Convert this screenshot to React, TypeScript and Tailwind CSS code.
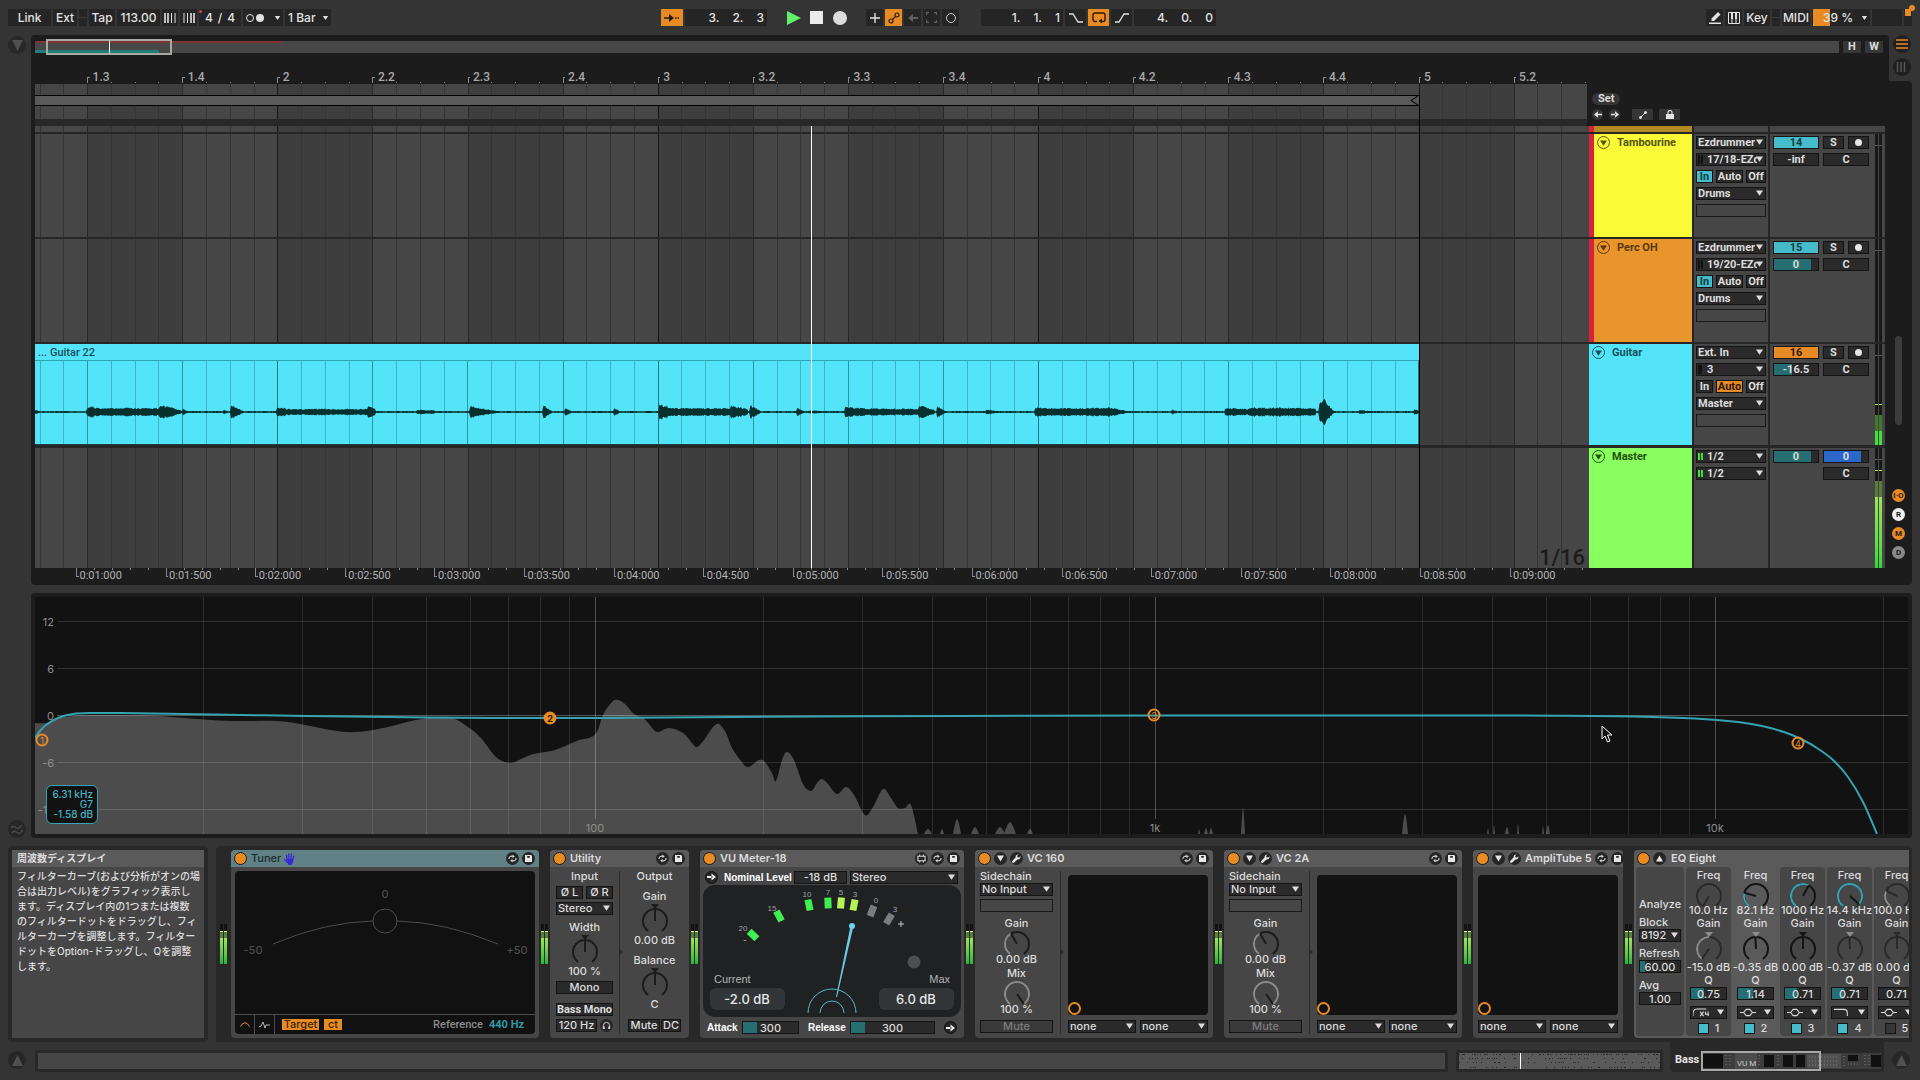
import { ReactNode } from 'react';
import clsx from 'clsx';

type Point = [number, number];

/* =========================
   TIMELINE DATA
========================= */
const TIMELINE = 1552;
const BEAT = 95.1;
const FIRST_BEAT = 52.6;

const BEATS = ['1.3', '1.4', '2', '2.2', '2.3', '2.4', '3', '3.2', '3.3', '3.4', '4', '4.2', '4.3', '4.4', '5', '5.2'];

const TIMES = [
  '0:01:000', '0:01:500', '0:02:000', '0:02:500', '0:03:000', '0:03:500', '0:04:000', '0:04:500', '0:05:000',
  '0:05:500', '0:06:000', '0:06:500', '0:07:000', '0:07:500', '0:08:000', '0:08:500', '0:09:000',
];

// start, end, level at start, level at end
const HITS = [
  [0, 5, 3, 1], [52, 58, 6, 8], [58, 125, 5, 5], [125, 146, 10, 2], [148, 153, 4, 1], [189, 192, 3, 1], [196, 207, 9, 2],
  [242, 250, 6, 5], [250, 333, 4, 4], [333, 340, 9, 4], [382, 400, 3, 2], [435, 444, 8, 5], [444, 464, 5, 1],
  [508, 516, 9, 2], [530, 537, 5, 1], [579, 585, 5, 1], [624, 634, 10, 6], [634, 696, 5, 5], [696, 712, 8, 4],
  [715, 725, 9, 2], [762, 770, 5, 1], [775, 792, 2, 1], [810, 822, 7, 5], [822, 883, 5, 4], [884, 899, 9, 3],
  [902, 911, 8, 1], [951, 963, 3, 1], [1000, 1010, 6, 5], [1010, 1073, 5, 5], [1073, 1094, 6, 1], [1137, 1142, 3, 1],
  [1190, 1214, 5, 4], [1214, 1280, 6, 5], [1284, 1288, 10, 17], [1288, 1298, 17, 2], [1324, 1336, 3, 1], [1379, 1384, 4, 2],
];

function wavePath() {
  const top: string[] = [];
  const bottom: string[] = [];
  for (let x = 0; x <= 1384; x++) {
    let amp = 1;
    HITS.forEach(([a, b, from, to]) => {
      if (x >= a && x <= b) amp = Math.max(amp, (from + ((to - from) * (x - a)) / (b - a)) * 0.85);
    });
    const noise = Math.abs((Math.sin(x * 78.233) * 43758.5453) % 1);
    const jitter = 0.65 + 0.35 * noise;
    top.push(`${x},${(52 - amp * jitter).toFixed(1)}`);
    bottom.unshift(`${x},${(52 + amp * jitter).toFixed(1)}`);
  }
  return `M${top.join('L')}L${bottom.join('L')}Z`;
}

/* =========================
   EQ DATA
========================= */
const SPECTRUM: Point[] = [
  [0, 126], [11, 126], [20, 122], [38, 119], [57, 118], [87, 118], [124, 119], [161, 122], [198, 124], [241, 124],
  [265, 127], [290, 132], [311, 135], [332, 134], [357, 129], [381, 123], [403, 120], [418, 121], [433, 130],
  [446, 141], [461, 160], [475, 166], [486, 162], [498, 157], [516, 154], [528, 150], [544, 143], [554, 141],
  [562, 135], [568, 118], [577, 105], [583, 103], [590, 107], [599, 117], [608, 121], [614, 127], [622, 135],
  [634, 131], [648, 136], [657, 146], [662, 150], [669, 143], [678, 130], [684, 127], [691, 136], [697, 151],
  [706, 164], [713, 170], [724, 163], [730, 165], [737, 176], [741, 184], [747, 163], [752, 155], [759, 163],
  [768, 187], [776, 194], [782, 186], [787, 182], [793, 187], [802, 197], [811, 190], [819, 198], [830, 218],
  [838, 210], [848, 192], [856, 201], [863, 211], [870, 211], [876, 208], [883, 237],
];

// x, y, half width
const PEAKS = [
  [893, 232, 4], [907, 232, 2], [922, 222, 4], [940, 230, 4], [965, 230, 5], [975, 225, 6], [995, 232, 3], [1164, 232, 1],
  [1171, 231, 2], [1176, 231, 2], [1208, 211, 2], [1370, 217, 3], [1453, 231, 1], [1459, 228, 1], [1472, 230, 2],
  [1483, 227, 1], [1508, 229, 1], [1513, 228, 2],
];

const CURVE: Point[] = [
  [0, 141], [5, 134], [11, 128], [23, 121], [38, 117], [57, 116], [87, 116], [149, 117], [271, 119], [394, 120.5],
  [485, 121], [577, 121], [700, 120], [925, 119], [1120, 118.5], [1400, 118.5], [1530, 118.7], [1599, 119.5], [1660, 121.5],
  [1703, 125], [1727, 129], [1749, 135], [1767, 142.5], [1782, 151], [1798, 163], [1813, 180], [1828, 205], [1842, 237],
];

function smooth(points: Point[]) {
  let d = `M${points[0][0]},${points[0][1]}`;
  for (let i = 0; i < points.length - 1; i++) {
    const [x0, y0] = points[Math.max(i - 1, 0)];
    const [x1, y1] = points[i];
    const [x2, y2] = points[i + 1];
    const [x3, y3] = points[Math.min(i + 2, points.length - 1)];
    d += `C${x1 + (x2 - x0) / 6},${y1 + (y2 - y0) / 6} ${x2 - (x3 - x1) / 6},${y2 - (y3 - y1) / 6} ${x2},${y2}`;
  }
  return d;
}

const freqX = (f: number) => 560 * Math.log10(f / 10);
const FREQS = [1, 2, 3, 4].flatMap((d) => [1, 2, 3, 4, 5, 6, 7, 8, 9].map((n) => n * 10 ** d)).filter((f) => f > 10 && f < 21000);

/* =========================
   SMALL CONTROLS
========================= */
function Triangle({ className = 'fill-[#dcdcdc]' }: { className?: string }) {
  return (
    <svg viewBox="0 0 8 6" className={clsx('w-[7px] h-[6px]', className)}>
      <path d="M0 0h8L4 6z" />
    </svg>
  );
}

function Select({ value, label, className, pad = 'pl-px', children }: { value: string; label: string; className?: string; pad?: string; children?: ReactNode }) {
  return (
    <div className={clsx('relative h-[13px] bg-[#2a2a2a] border border-[#141414] text-[#dcdcdc]', className)}>
      <select aria-label={label} className={clsx('block w-full h-[11px] appearance-none bg-transparent leading-[11px] pr-2 overflow-hidden outline-none', pad)}>
        <option>{value}</option>
      </select>
      {children}
      <span className="absolute right-[2px] top-[2px] pointer-events-none">
        <Triangle />
      </span>
    </div>
  );
}

function Btn({ children, className, label }: { children?: ReactNode; className?: string; label?: string }) {
  return (
    <button aria-label={label} className={clsx('h-[13px] flex items-center justify-center border border-[#141414] leading-[11px] whitespace-nowrap', className)}>
      {children}
    </button>
  );
}

function Field({ value, label, fill = 0, color = 'bg-[#256e72]', className }: { value: string; label: string; fill?: number; color?: string; className?: string }) {
  return (
    <div className={clsx('relative h-[13px] bg-[#2a2a2a] border border-[#141414]', className)}>
      <div className={clsx('absolute inset-y-0 left-0', color)} style={{ width: `${fill}%` }} />
      <input aria-label={label} defaultValue={value} className="relative block w-full h-[11px] leading-[11px] text-center bg-transparent text-[#dcdcdc] outline-none" />
    </div>
  );
}

function arc(from: number, to: number) {
  const p = (a: number) => {
    const r = ((a - 90) * Math.PI) / 180;
    return `${(14 + 12 * Math.cos(r)).toFixed(2)} ${(14 + 12 * Math.sin(r)).toFixed(2)}`;
  };
  return `M${p(from)}A12 12 0 ${to - from > 180 ? 1 : 0} 1 ${p(to)}`;
}

type KnobProps = { angle: number; label: string; fill?: string; bipolar?: boolean; track?: string; needle?: string; marker?: string };

function Knob({ angle, label, fill, bipolar, track = '#1c1c1c', needle = '#1c1c1c', marker }: KnobProps) {
  const r = ((angle - 90) * Math.PI) / 180;
  return (
    <span className="relative block w-7 h-7">
      <svg viewBox="0 0 28 28" className="w-7 h-7 overflow-visible" fill="none" strokeWidth="2">
        <path d={arc(-145, 145)} stroke={track} />
        {fill && bipolar && <path d={arc(angle, 0)} stroke={fill} />}
        {fill && !bipolar && angle > -144 && <path d={arc(-145, angle)} stroke={fill} />}
        <path d={`M14 14L${14 + 12 * Math.cos(r)} ${14 + 12 * Math.sin(r)}`} stroke={needle} />
        {marker && <path d="M10 -3h8l-4 5z" fill={marker} />}
      </svg>
      <input type="range" aria-label={label} className="absolute inset-0 w-7 h-7 opacity-0" />
    </span>
  );
}

function Round({ children, label, className = 'bg-[#262626]' }: { children?: ReactNode; label: string; className?: string }) {
  return (
    <button aria-label={label} className={clsx('size-[13px] shrink-0 rounded-full flex items-center justify-center', className)}>
      {children}
    </button>
  );
}

function Meter({ className }: { className?: string }) {
  return (
    <div className={clsx('shrink-0 flex justify-center gap-px pt-[74px]', className)}>
      {[0, 1].map((i) => (
        <div key={i} className="w-[3px] h-10 flex flex-col bg-[#121212]">
          <div className="mt-[7px] h-px bg-[#e6f28a]" />
          <div className="h-[6px] bg-[#56803c]" />
          <div className="flex-1 bg-linear-to-b from-[#9be35c] to-[#25b53c]" />
        </div>
      ))}
    </div>
  );
}

/* =========================
   TOP BAR
========================= */
const cell = 'h-[17px] bg-[#252525] text-[#e2e2e2] flex items-center justify-center';

function TopBar() {
  return (
    <header className="h-[35px] px-2 pt-[9px] grid grid-cols-[653fr_1251fr] items-start text-[12px] leading-[17px] font-medium">
      <div className="flex gap-[2px]">
        <button className={clsx(cell, 'w-[43px]')}>Link</button>
        <button className={clsx(cell, 'w-6')}>Ext</button>
        <span className={clsx(cell, 'w-2')}><i className="w-2 h-px bg-[#3a3a3a]" /></span>
        <button className={clsx(cell, 'w-[26px]')}>Tap</button>
        <input aria-label="Tempo" defaultValue="113.00" className="h-[17px] w-[43px] bg-[#252525] text-[#e2e2e2] text-center" />
        <button aria-label="Nudge down" className={clsx(cell, 'w-4')}>
          <svg viewBox="0 0 12 10" className="w-3 h-[10px]" stroke="#e2e2e2"><path d="M1 0v10M4 0v10" strokeWidth="1.6" /><path d="M7.500 0v10M11 0v10" /></svg>
        </button>
        <button aria-label="Nudge up" className={clsx(cell, 'w-[17px]')}>
          <svg viewBox="0 0 12 10" className="w-3 h-[10px]" stroke="#e2e2e2"><path d="M1 0v10M4.500 0v10" /><path d="M8 0v10M11 0v10" strokeWidth="1.6" /></svg>
        </button>
        <div className={clsx(cell, 'w-[42px] relative gap-[5px]')}>
          <span>4</span><span>/</span><span>4</span>
          <i className="absolute left-0 top-px size-[3px] rounded-full bg-[#d8404a]" />
        </div>
        <button aria-label="Metronome" className={clsx(cell, 'w-10 gap-[2px]')}>
          <i className="size-2 rounded-full border border-[#e2e2e2]" />
          <i className="size-2 rounded-full bg-[#e2e2e2]" />
          <Triangle className="fill-[#e2e2e2] scale-75 ml-2" />
        </button>
        <div className={clsx(cell, 'w-[46px] relative')}>
          <select aria-label="Quantization" className="w-full h-[17px] pl-[3px] appearance-none bg-transparent outline-none">
            <option>1 Bar</option>
          </select>
          <Triangle className="fill-[#e2e2e2] scale-75 absolute right-[2px]" />
        </div>
      </div>

      <div className="flex justify-between">
        <div className="flex items-center gap-[2px]">
          <button aria-label="Follow" className="w-[22px] h-[17px] bg-[#e88b25] flex items-center justify-center">
            <svg viewBox="0 0 16 10" className="w-4 h-[10px]"><path d="M0 5h6" stroke="#2a1a05" strokeWidth="1.5" /><path d="M5 1l5 4-5 4z" fill="#2a1a05" /><path d="M11 5h5" stroke="#2a1a05" strokeWidth="1.5" strokeDasharray="1.5 1" /></svg>
          </button>
          <div className={clsx(cell, 'w-[82px] justify-end pr-[3px] gap-[13px]')}><span>3.</span><span>2.</span><span>3</span></div>
          <button aria-label="Play" className="ml-[18px] w-[15px]"><svg viewBox="0 0 14 14" className="w-[14px] h-[14px] fill-[#62f06a]"><path d="M0 0l14 7L0 14z" /></svg></button>
          <button aria-label="Stop" className="ml-[6px] size-[13px] bg-[#ebebeb]" />
          <button aria-label="Record" className="ml-2 size-[14px] rounded-full bg-[#dcdcdc]" />
          <button aria-label="Overdub" className={clsx(cell, 'ml-[17px] w-[17px]')}><svg viewBox="0 0 10 10" className="size-[10px]" stroke="#e2e2e2" strokeWidth="1.4"><path d="M5 0v10M0 5h10" /></svg></button>
          <button aria-label="Automation arm" className="w-[17px] h-[17px] bg-[#e88b25] flex items-center justify-center">
            <svg viewBox="0 0 12 12" className="size-3" fill="none" stroke="#2a1a05" strokeWidth="1.2"><circle cx="3" cy="9" r="2" /><circle cx="9" cy="3" r="2" /><path d="M4.5 7.5l3-3" /></svg>
          </button>
          <button aria-label="Re-enable" className={clsx(cell, 'w-[17px]')}><svg viewBox="0 0 10 8" className="w-[10px] h-2" fill="#5e5e5e"><path d="M5 0v8L0 4zM4 3h6v2H4z" /></svg></button>
          <button aria-label="Capture" className={clsx(cell, 'w-[17px]')}><svg viewBox="0 0 11 11" className="size-[11px]" fill="none" stroke="#5e5e5e" strokeWidth="1.2"><path d="M.6 3V.6H3M8 .6h2.4V3M10.400 8v2.400H8M3 10.400H.6V8" /></svg></button>
          <button aria-label="Session record" className={clsx(cell, 'w-[17px]')}><i className="size-[10px] rounded-full border border-[#c8c8c8]" /></button>
          <div className={clsx(cell, 'ml-[20px] w-[82px] justify-end pr-[3px] gap-[13px]')}><span>1.</span><span>1.</span><span>1</span></div>
          <button aria-label="Punch in" className={clsx(cell, 'w-[21px]')}><svg viewBox="0 0 14 10" className="w-[14px] h-[10px]" fill="none" stroke="#e2e2e2" strokeWidth="1.3"><path d="M0 1h4l5 8h5" /></svg></button>
          <button aria-label="Loop" className="w-[21px] h-[17px] bg-[#e88b25] flex items-center justify-center">
            <svg viewBox="0 0 14 12" className="w-[14px] h-3"><path d="M5 9.500H3a2 2 0 0 1-2-2V3a2 2 0 0 1 2-2h8a2 2 0 0 1 2 2v4.500a2 2 0 0 1-2 2H9" fill="none" stroke="#2a1a05" strokeWidth="1.400" /><path d="M10 6.500v5L6.500 9z" fill="#2a1a05" /></svg>
          </button>
          <button aria-label="Punch out" className={clsx(cell, 'w-[21px]')}><svg viewBox="0 0 14 10" className="w-[14px] h-[10px]" fill="none" stroke="#e2e2e2" strokeWidth="1.3"><path d="M0 9h4l5-8h5" /></svg></button>
          <div className={clsx(cell, 'w-[82px] justify-end pr-[3px] gap-[13px]')}><span>4.</span><span>0.</span><span>0</span></div>
        </div>

        <div className="flex gap-[2px]">
          <button aria-label="Draw mode" className={clsx(cell, 'w-[17px]')}><svg viewBox="0 0 12 12" className="size-3" fill="#e2e2e2"><path d="M9 0l2.500 2.500-6.500 6.500H2.500V6.500zM0 10.500h12V12H0z" /></svg></button>
          <button aria-label="MIDI keyboard" className={clsx(cell, 'w-[17px]')}><svg viewBox="0 0 12 12" className="size-3" fill="none" stroke="#e2e2e2"><path d="M.5.5h11v11H.5zM4 6v6M8 6v6" /><path d="M4 0v7M8 0v7" strokeWidth="2" /></svg></button>
          <button className={clsx(cell, 'w-[26px]')}>Key</button>
          <span className={clsx(cell, 'w-2')}><i className="w-2 h-px bg-[#3a3a3a]" /></span>
          <button className={clsx(cell, 'w-7')}>MIDI</button>
          <div className={clsx(cell, 'w-[58px] relative')}>
            <div className="absolute left-px inset-y-0 bg-[#e88b25] w-[17px]" />
            <select aria-label="CPU load" className="relative w-full h-[17px] pl-[11px] appearance-none bg-transparent outline-none"><option>39 %</option></select>
            <Triangle className="fill-[#e2e2e2] scale-75 absolute right-[2px]" />
          </div>
          <span className={clsx(cell, 'w-[30px]')} />
          <span className={clsx(cell, 'w-2 relative')}>
            <i className="absolute right-px top-0 w-[6px] h-[7px] bg-[#e88b25]" />
            <i className="absolute -right-[3px] -top-1 size-[6px] rounded-full bg-[#e88b25]" />
          </span>
        </div>
      </div>
    </header>
  );
}

/* =========================
   ARRANGEMENT
========================= */
const pct = (x: number) => `${(x / TIMELINE) * 100}%`;

function BeatRuler() {
  return (
    <div className="relative h-7 ml-1 mr-[302px] z-10 text-[12px] leading-3 font-medium text-[#a8a8a8]">
      <svg viewBox={`0 0 ${TIMELINE} 28`} preserveAspectRatio="none" className="absolute inset-0 w-full h-full" stroke="#8a8a8a" fill="none" shapeRendering="crispEdges">
        {BEATS.map((b, i) => {
          const x = FIRST_BEAT + i * BEAT;
          return <path key={b} d={`M${x} 28v-6h2M${x + 23.8} 28v-1M${x + 47.5} 28v-1M${x + 71.3} 28v-1`} />;
        })}
      </svg>
      {BEATS.map((b, i) => (
        <span key={b} className="absolute top-4 pl-[5px]" style={{ left: pct(FIRST_BEAT + i * BEAT) }}>{b}</span>
      ))}
    </div>
  );
}

function LaneGrid({ lines = true }: { lines?: boolean }) {
  const sixteenths = Array.from({ length: 65 }, (_, i) => i);
  return (
    <svg viewBox={`0 0 ${TIMELINE} 100`} preserveAspectRatio="none" className="absolute inset-0 w-full h-full" shapeRendering="crispEdges">
      {lines && BEATS.map((b, i) => i % 2 === 0 && <rect key={b} x={FIRST_BEAT + i * BEAT} y="0" width={BEAT} height="100" fill="#3e3e3e" />)}
      {sixteenths.map((i) => {
        const x = FIRST_BEAT + (i - 2) * (BEAT / 4);
        const n = i - 2;
        const bar = n % 16 === 8;
        return <path key={i} d={`M${x} 0v100`} stroke={lines ? (bar ? '#161616' : n % 4 === 0 ? '#292929' : '#343434') : bar ? '#1c6b75' : n % 4 === 0 ? '#2b8c99' : '#3cb0bf'} />;
      })}
    </svg>
  );
}

function Timeline() {
  return (
    <div className="flex-1 min-w-0 flex flex-col">
      <div className="relative flex-1 flex flex-col bg-[#464646]">
        <LaneGrid />
        <div className="relative mt-[11px] h-[11px] w-[89.2%] bg-[#5a5a5a] border-y border-black flex justify-end">
          <svg viewBox="0 0 9 9" className="h-[9px] w-[9px]" fill="none" stroke="#111" strokeWidth="1.2"><path d="M8 0L1 4.500 8 9" /></svg>
        </div>
        <div className="relative mt-[13px] h-[7px] bg-[#282828]" />
        <div className="relative h-2 border-b-2 border-[#262626]" />
        <div className="relative h-[105px] border-b-2 border-[#262626]" />
        <div className="relative h-[105px] border-b-2 border-[#262626]" />
        <div className="relative h-[104px] border-b-[3px] border-[#262626]">
          <div className="relative h-full w-[89.2%] bg-[#54e4fa] overflow-hidden border-b border-[#1e3c40]">
            <p className="h-[17px] pl-[3px] text-[11px] leading-[17px] font-medium text-[#155059] border-b border-[#2aa5b5]">... Guitar 22</p>
            <div className="absolute top-[17px] bottom-0 left-0 w-[112.1%]"><LaneGrid lines={false} /></div>
            <svg viewBox="0 0 1384 84" preserveAspectRatio="none" className="absolute left-0 bottom-0 w-full h-[84px]">
              <path d={wavePath()} fill="#08302f" />
            </svg>
          </div>
        </div>
        <div className="relative flex-1 min-h-[120px] flex items-end justify-end">
          <span className="text-[22px] leading-5 font-medium text-[#1c1c1c] pr-[2px]">1/16</span>
        </div>
        {/* playhead and end of the set */}
        <div className="absolute top-[11px] bottom-0 w-px bg-black" style={{ left: pct(1384) }} />
        <div className="absolute top-[42px] bottom-0 w-px bg-white" style={{ left: pct(776) }} />
      </div>
      <div className="relative h-[17px] text-[11px] leading-[16px] text-[#b4b4b4]">
        <svg viewBox={`0 0 ${TIMELINE} 17`} preserveAspectRatio="none" className="absolute inset-0 w-full h-full" stroke="#8a8a8a" fill="none" shapeRendering="crispEdges">
          {TIMES.map((t, i) => {
            const x = 41.5 + i * 89.6;
            return <path key={t} d={`M${x} 0v8h2M${x + 18} 0v2M${x + 36} 0v2M${x + 54} 0v2M${x + 72} 0v2`} />;
          })}
        </svg>
        {TIMES.map((t, i) => (
          <span key={t} className="absolute top-0 pl-[3px]" style={{ left: pct(41.5 + i * 89.6) }}>{t}</span>
        ))}
      </div>
    </div>
  );
}

type Track = {
  name: string;
  color: string;
  ink: string;
  grouped?: boolean;
  input: string;
  channel: string;
  monitor: 'In' | 'Auto';
  output: string;
  number: string;
  volume: string;
  fill: number;
  height: string;
  level: number;
};

const TRACKS: Track[] = [
  { name: 'Tambourine', color: 'bg-[#fafa37]', ink: 'text-[#55550f] border-[#55550f]', grouped: true, input: 'Ezdrummer', channel: '17/18-EZd', monitor: 'In', output: 'Drums', number: '14', volume: '-inf', fill: 0, height: 'h-[105px] border-b-2', level: 0 },
  { name: 'Perc OH', color: 'bg-[#e8962c]', ink: 'text-[#5a3508] border-[#5a3508]', grouped: true, input: 'Ezdrummer', channel: '19/20-EZd', monitor: 'In', output: 'Drums', number: '15', volume: '0', fill: 84, height: 'h-[105px] border-b-2', level: 0 },
  { name: 'Guitar', color: 'bg-[#54e4fa]', ink: 'text-[#155059] border-[#155059]', input: 'Ext. In', channel: '3', monitor: 'Auto', output: 'Master', number: '16', volume: '-16.5', fill: 42, height: 'h-[104px] border-b-[3px]', level: 14 },
];

function TrackName({ name, color, ink, grouped }: Pick<Track, 'name' | 'color' | 'ink' | 'grouped'>) {
  return (
    <div className="w-[107px] pl-[2px] flex border-r-2 border-[#262626]">
      {grouped && <div className="w-[5px] bg-[#d8213c]" />}
      <div className={clsx('flex-1 flex items-start gap-[7px] pl-[3px] pt-[2px]', color)}>
        <button aria-label={`Fold ${name}`} className={clsx('size-[13px] rounded-full border flex items-center justify-center', ink)}>
          <Triangle className="fill-current" />
        </button>
        <span className={clsx('leading-[13px] font-bold', ink)}>{name}</span>
      </div>
    </div>
  );
}

function TrackMeter({ level, hot }: { level: number; hot?: boolean }) {
  return (
    <div className="ml-[6px] flex gap-px">
      {[0, 1].map((i) => (
        <div key={i} className="w-[3px] h-full bg-[#181818] flex flex-col justify-end">
          <div className="h-px bg-[#5a5a5a] mt-[11px] mb-auto" />
          {level > 0 && <div className="h-px bg-[#b5e86a] mb-[10px]" />}
          {level > 0 && <div className={clsx('h-4', hot ? 'bg-[#5a7c3a]' : 'bg-[#3f7a2c]')} />}
          <div className={clsx(hot ? 'bg-linear-to-b from-[#9be35c] to-[#2fd83c]' : 'bg-[#3fe03c]')} style={{ height: level }} />
        </div>
      ))}
    </div>
  );
}

const dark = 'bg-[#2a2a2a] text-[#dcdcdc]';
const cyan = 'bg-[#46bccb] text-[#0f3d44]';
const orange = 'bg-[#e88b25] text-[#2a1a05]';

function TrackRow(track: Track) {
  const { name, height, input, channel, monitor, output, number, volume, fill, level } = track;
  return (
    <div className={clsx('flex bg-[#464646] border-[#262626]', height)}>
      <TrackName {...track} />
      <div className="w-[76px] px-[2px] pt-[2px] flex flex-col gap-1 border-r-2 border-[#262626]">
        <Select label={`${name} input`} value={input} />
        <Select label={`${name} channel`} value={channel} pad="pl-[10px]">
          <i className={clsx('absolute left-px top-px h-[9px] border-[#121212]', channel === '3' ? 'w-1 bg-[#121212]' : 'w-[5px] border-x-2')} />
        </Select>
        <div className="flex justify-between">
          <Btn className={clsx('w-[17px]', monitor === 'In' ? cyan : dark)}>In</Btn>
          <Btn className={clsx('w-[27px]', monitor === 'Auto' ? orange : dark)}>Auto</Btn>
          <Btn className={clsx('w-5', dark)}>Off</Btn>
        </div>
        <Select label={`${name} output`} value={output} />
        <div className="h-[13px] border border-[#1a1a1a]" />
      </div>
      <div className="flex-1 pl-[3px] flex">
        <div className="grid grid-cols-[46px_21px_21px] gap-x-1 gap-y-1 content-start pt-[2px]">
          <Btn className={number === '16' ? orange : cyan}>{number}</Btn>
          <Btn className={dark}>S</Btn>
          <Btn className={dark} label={`Arm ${name}`}><i className="size-[7px] rounded-full bg-[#e6e6e6]" /></Btn>
          <Field label={`${name} volume`} value={volume} fill={fill} />
          <Field label={`${name} pan`} value="C" className="col-span-2" />
        </div>
        <TrackMeter level={level} />
      </div>
    </div>
  );
}

function MasterRow() {
  const io = (
    <i className="absolute left-px top-[2px] w-[5px] h-[7px] border-x-2 border-[#3fe03c]" />
  );
  return (
    <div className="flex flex-1 min-h-[120px] bg-[#464646]">
      <TrackName name="Master" color="bg-[#88ff5e]" ink="text-[#245010] border-[#245010]" />
      <div className="w-[76px] px-[2px] pt-[2px] flex flex-col gap-1 border-r-2 border-[#262626]">
        <Select label="Cue out" value="1/2" pad="pl-[10px]">{io}</Select>
        <Select label="Master out" value="1/2" pad="pl-[10px]">{io}</Select>
      </div>
      <div className="flex-1 pl-[3px] flex">
        <div className="grid grid-cols-[46px_46px] gap-1 content-start pt-[2px]">
          <Field label="Master volume" value="0" fill={84} />
          <Field label="Cue volume" value="0" fill={84} color="bg-[#2968c8]" />
          <Field label="Master pan" value="C" className="col-start-2" />
        </div>
        <TrackMeter level={71} hot />
      </div>
    </div>
  );
}

function Arrangement() {
  const rail = [
    ['I·O', 'bg-[#e88b25]'],
    ['R', 'bg-[#f0f0f0]'],
    ['M', 'bg-[#e88b25]'],
    ['D', 'bg-[#8a8a8a]'],
  ];
  return (
    <section className="flex-1 flex pr-2 font-[Roboto,sans-serif]">
      <div className="w-[31px] pl-2">
        <button aria-label="Show browser" className="mt-px size-[18px] rounded-full bg-[#282828] flex items-center justify-center">
          <svg viewBox="0 0 10 10" className="size-[11px] fill-[#505050]"><path d="M0 0h10L5 10z" /></svg>
        </button>
      </div>
      <div className="flex-1 min-w-0 flex flex-col">
        <div className="h-[46px] flex">
          <div className="flex-1 bg-[#1c1c1c] rounded-t-sm">
            <div className="h-5 pt-[6px] pl-1 pr-[6px] flex gap-1">
              <div className="relative flex-1 h-3 bg-[#474747]">
                <div className="absolute left-0 top-0 h-[2px] w-[248px] bg-[#7c3436]" />
                <div className="absolute left-0 bottom-0 h-[3px] w-[124px] bg-[#227c78]" />
                <div className="absolute left-[11px] -top-[2px] w-[126px] h-4 border-2 border-[#a6aaa2]" />
                <div className="absolute left-[74px] top-0 w-px h-3 bg-white" />
              </div>
              <button className="w-[18px] h-3 bg-[#363636] text-[11px] leading-3 font-bold text-[#dcdcdc]">H</button>
              <button className="w-[18px] h-3 bg-[#363636] text-[11px] leading-3 font-bold text-[#dcdcdc]">W</button>
            </div>
            <BeatRuler />
          </div>
          <div className="w-[23px] pl-1 flex flex-col gap-[5px]">
            <button aria-label="Arrangement view" className="size-[18px] rounded-full bg-[#202020] flex items-center justify-center">
              <svg viewBox="0 0 12 10" className="w-3 h-[10px]" stroke="#e88b25" strokeWidth="1.500"><path d="M0 1h12M0 5h12M0 9h12" /></svg>
            </button>
            <button aria-label="Session view" className="size-[18px] rounded-full bg-[#202020] flex items-center justify-center">
              <svg viewBox="0 0 12 10" className="w-3 h-[10px]" stroke="#555" strokeWidth="1.500"><path d="M1.500 0v10M5 0v10M8.500 0v10" /></svg>
            </button>
          </div>
        </div>

        <div className="flex-1 flex pl-1 bg-[#1c1c1c] rounded-b-sm rounded-tr-sm">
          <div className="flex-1 min-w-0 flex pt-[3px]"><Timeline /></div>
          <div className="w-[298px] flex flex-col">
            <div className="h-[45px] pt-[12px] pl-[5px] text-[11px] text-[#dcdcdc]">
              <button className="block h-3 px-[6px] rounded-full bg-[#363636] leading-3 font-bold">Set</button>
              <div className="mt-1 flex items-center">
                <button aria-label="Previous locator" className="size-[11px] rounded-full bg-[#363636] flex items-center justify-center">
                  <svg viewBox="0 0 10 8" className="w-2 h-[7px]" fill="#e6e6e6"><path d="M5 0v8L0 4zM4 3h6v2H4z" /></svg>
                </button>
                <button aria-label="Next locator" className="ml-[6px] size-[11px] rounded-full bg-[#363636] flex items-center justify-center">
                  <svg viewBox="0 0 10 8" className="w-2 h-[7px]" fill="#e6e6e6"><path d="M5 0v8l5-4zM0 3h6v2H0z" /></svg>
                </button>
                <button aria-label="Automation mode" className="ml-3 w-[21px] h-[11px] bg-[#363636] flex items-center justify-center">
                  <svg viewBox="0 0 8 8" className="size-2" fill="#e6e6e6" stroke="#e6e6e6"><circle cx="1.500" cy="6.500" r="1" /><circle cx="6.500" cy="1.500" r="1" /><path d="M2 6l4-4" /></svg>
                </button>
                <button aria-label="Lock envelopes" className="ml-[6px] w-[21px] h-[11px] bg-[#363636] flex items-center justify-center">
                  <svg viewBox="0 0 8 9" className="w-2 h-[9px]" fill="#e6e6e6"><path d="M0 4h8v5H0z" /><path d="M2 4V2.500a2 2 0 0 1 4 0V4" fill="none" stroke="#e6e6e6" strokeWidth="1.200" /></svg>
                </button>
              </div>
            </div>
            <div className="flex h-2 border-b-2 border-[#262626] bg-[#464646]">
              <div className="w-[107px] pl-[2px] flex border-r-2 border-[#262626]">
                <div className="w-[5px] bg-[#d8213c]" />
                <div className="flex-1 bg-[#b58a25]" />
              </div>
              <div className="w-[76px] border-r-2 border-[#262626]" />
            </div>
            <div className="flex-1 flex flex-col text-[11px] font-bold">
              {TRACKS.map((t) => <TrackRow key={t.name} {...t} />)}
              <MasterRow />
            </div>
            <div className="h-[17px]" />
          </div>
          <div className="w-[27px] flex flex-col items-center">
            <div className="mt-[255px] w-[7px] h-[89px] rounded-full bg-[#3c3c3c]" />
            <div className="mt-16 flex flex-col gap-[6px]">
              {rail.map(([t, c]) => (
                <button key={t} className={clsx('size-[13px] rounded-full text-[8px] leading-[13px] font-bold text-[#1a1a1a] text-center', c)}>{t}</button>
              ))}
            </div>
          </div>
        </div>
      </div>
    </section>
  );
}

/* =========================
   EQ DISPLAY
========================= */
function EqDisplay() {
  const nodes = [
    { n: 1, x: 7, y: 143 },
    { n: 2, x: 515, y: 121 },
    { n: 3, x: 1119, y: 118 },
    { n: 4, x: 1763, y: 146 },
  ];
  return (
    <section className="mt-2 h-[245px] flex pr-2">
      <div className="w-[31px] pl-2 pt-[227px]">
        <button aria-label="Follow display" className="size-[18px] rounded-full bg-[#272727] flex items-center justify-center">
          <svg viewBox="0 0 12 10" className="w-3 h-[10px]" fill="none" stroke="#4a4a4a" strokeWidth="1.500"><path d="M0 4c3-5 5 2 8 0l3-3M1 9c3-5 5 2 8 0l3-3" /></svg>
        </button>
      </div>
      <div className="flex-1 p-1 bg-[#1c1c1c] rounded-sm">
        <div className="relative h-full bg-[#121212] overflow-hidden text-[11px] leading-3 text-[#8c8c8c]">
          <svg viewBox="0 0 1873 237" preserveAspectRatio="none" className="absolute inset-0 w-full h-full">
            <path d={`${smooth(SPECTRUM)}L0 237Z`} fill="#4c4c4c" />
            {PEAKS.map(([x, y, w]) => <path key={x} d={`M${x - w} 237Q${x - w / 3} ${y} ${x} ${y}Q${x + w / 3} ${y} ${x + w} 237Z`} fill="#4c4c4c" />)}
            <g stroke="#fff" shapeRendering="crispEdges">
              {FREQS.map((f) => {
                const major = f === 100 || f === 1000 || f === 10000;
                return <path key={f} d={`M${freqX(f)} 0V${major ? 222 : 237}`} opacity={major ? 0.26 : 0.11} />;
              })}
              {[25, 72, 119, 166, 213].map((y) => <path key={y} d={`M22 ${y - 0.5}H1873`} opacity={y === 119 ? 0.28 : 0.13} />)}
            </g>
            <path d={smooth(CURVE)} fill="none" stroke="#35a3b1" strokeWidth="2" />
          </svg>
          {[['12', 'top-[19px]'], ['6', 'top-[66px]'], ['0', 'top-[113px]'], ['-6', 'top-[160px]'], ['-12', 'top-[207px]']].map(([t, top]) => (
            <span key={t} className={clsx('absolute left-0 w-[19px] text-right', top)}>{t}</span>
          ))}
          {[['100', 560], ['1k', 1120], ['10k', 1680]].map(([t, x]) => (
            <span key={t} className="absolute bottom-0 -translate-x-1/2" style={{ left: `${(Number(x) / 1873) * 100}%` }}>{t}</span>
          ))}
          {nodes.map(({ n, x, y }) => (
            <button
              key={n}
              aria-label={`Band ${n}`}
              className={clsx('absolute size-[13px] -translate-1/2 rounded-full border-2 border-[#e88b25] text-[9px] flex items-center justify-center', n === 2 ? 'bg-[#e88b25] text-[#1a1a1a] font-bold' : 'text-[#e88b25]')}
              style={{ left: `${(x / 1873) * 100}%`, top: y }}
            >
              {n}
            </button>
          ))}
          <p className="absolute left-[11px] bottom-[10px] w-[52px] h-[39px] rounded-md border border-[#35a3b1] bg-[#121212] pt-[3px] pr-1 text-right leading-[10px] text-[10px] font-medium text-[#43b4c6]">
            6.31 kHz<br />G7<br />-1.58 dB
          </p>
          <svg viewBox="0 0 12 19" className="absolute left-[83.6%] top-[128px] w-3 h-[19px]"><path d="M1 1v13l3-3 2.500 6 2.500-1-2.500-6H11z" fill="#111" stroke="#fff" /></svg>
        </div>
      </div>
    </section>
  );
}

/* =========================
   DEVICES
========================= */
function OnDot() {
  return <Round label="Device on" className="bg-[#e88b25] border border-[#1a1a1a]" />;
}

function Swap() {
  return (
    <Round label="Hot-swap">
      <svg viewBox="0 0 10 10" className="size-[9px]" fill="none" stroke="#dcdcdc" strokeWidth="1.200"><path d="M1 5.500C1 3 3 2 5.500 2.500M9 4.500C9 7 7 8 4.500 7.500" /><path d="M5 .5L7.500 2.700 5 4.500zM5 5.500L2.500 7.300 5 9.500z" fill="#dcdcdc" stroke="none" /></svg>
    </Round>
  );
}

function Save() {
  return (
    <Round label="Save preset">
      <svg viewBox="0 0 8 8" className="size-[7px]"><path d="M0 0h7l1 1v7H0z" fill="#e6e6e6" /><path d="M2.500 1h3v2h-3z" fill="#262626" /></svg>
    </Round>
  );
}

function Wrench() {
  return (
    <Round label="Edit plug-in">
      <svg viewBox="0 0 10 10" className="size-[9px]"><path d="M9.500 2.500L8 4 6 3.500 5.800 2 7.300.5A3 3 0 0 0 4 4L.5 7.500a1.300 1.300 0 0 0 2 2L6 6a3 3 0 0 0 3.500-3.500z" fill="#e6e6e6" /></svg>
    </Round>
  );
}

function Fold({ up }: { up?: boolean }) {
  return (
    <Round label="Unfold plug-in">
      <svg viewBox="0 0 8 7" className={clsx('w-[7px] h-[7px] fill-[#e6e6e6]', up && 'rotate-180')}><path d="M0 0h8L4 7z" /></svg>
    </Round>
  );
}

function ArrowRight({ label }: { label: string }) {
  return (
    <Round label={label} className="bg-[#262626] border border-[#111]">
      <svg viewBox="0 0 10 8" className="w-[9px] h-2" fill="#f0f0f0"><path d="M5 0v8l5-4zM0 3h6v2H0z" /></svg>
    </Round>
  );
}

type DeviceProps = { title: string; width: string; left?: ReactNode; right?: ReactNode; children: ReactNode };

function Device({ title, width, left, right, children }: DeviceProps) {
  return (
    <article className={clsx('shrink-0 h-[188px] rounded bg-[#464646] overflow-hidden text-[11px] leading-[13px] font-medium text-[#dcdcdc] flex flex-col', width)}>
      <header className="h-[17px] pl-[3px] pr-1 flex items-center gap-[3px] bg-[#5a5a5a]">
        <OnDot />
        {left}
        <h2 className="flex-1 ml-px font-semibold whitespace-nowrap">{title}</h2>
        {right}
      </header>
      {children}
    </article>
  );
}

function Tuner() {
  return (
    <article className="shrink-0 w-[308px] h-[188px] rounded bg-[#464646] overflow-hidden text-[11px] leading-[13px] font-medium">
      <header className="h-[17px] pl-[3px] pr-1 flex items-center gap-[3px] bg-[#608287] text-[#1c2a2c]">
        <OnDot />
        <h2 className="ml-px">Tuner</h2>
        <svg viewBox="0 0 11 12" className="w-[11px] h-3 flex-none fill-[#3a28d8]" stroke="#3a28d8" strokeLinecap="round" strokeWidth="1.300"><path d="M3.500 6.500h5v2.500l-1.500 2.500H5z" /><path d="M3.200 7L2.500 2.500M5 6L4.800 1M7 6L7.200 1M8.700 7L9.700 3M3.500 9.500L.8 6.500" /></svg>
        <span className="flex-1" />
        <Swap />
        <Save />
      </header>
      <div className="m-1 h-[163px] rounded-sm bg-[#111] flex flex-col">
        <svg viewBox="0 0 300 143" className="h-[143px] w-full" fill="none" stroke="#4c4c4c">
          <path d="M38 73Q90 51 138 50M162 50Q210 51 263 73" />
          <circle cx="150" cy="50" r="12" />
          <g fill="#4c4c4c" stroke="none" textAnchor="middle" className="text-[11px]">
            <text x="150" y="27">0</text>
            <text x="18" y="83">-50</text>
            <text x="282" y="83">+50</text>
          </g>
        </svg>
        <div className="flex-1 border-t border-[#4c4c4c] flex items-center">
          <button aria-label="Classic view" className="w-5 h-full border-r border-[#4c4c4c] flex items-center justify-center">
            <svg viewBox="0 0 10 5" className="w-[10px] h-[5px]" fill="none" stroke="#e88b25"><path d="M.5 4.500Q5-3 9.500 4.500" /></svg>
          </button>
          <button aria-label="Histogram view" className="w-5 h-full border-r border-[#4c4c4c] flex items-center justify-center">
            <svg viewBox="0 0 11 8" className="w-[11px] h-2" fill="none" stroke="#b4b4b4"><path d="M0 6l2-1 2-4 2 6 1-3h4" /></svg>
          </button>
          <button className="ml-[7px] h-[11px] w-[37px] leading-[11px] bg-[#e88b25] text-[#3a2408]">Target</button>
          <button className="ml-[5px] h-[11px] w-[18px] leading-[11px] bg-[#e88b25] text-[#3a2408]">ct</button>
          <span className="ml-auto font-[Roboto] text-[#8c8c8c]">Reference</span>
          <span className="ml-[6px] mr-[11px] font-[Roboto] text-[#2f98a6] font-bold">440 Hz</span>
        </div>
      </div>
    </article>
  );
}

function Utility() {
  return (
    <Device title="Utility" width="w-[139px]" right={<><Swap /><Save /></>}>
      <div className="flex-1 flex text-center">
        <div className="w-[69px] px-[6px] pt-[3px] pb-[6px] flex flex-col items-center">
          <p>Input</p>
          <div className="mt-[3px] w-full flex justify-between">
            <Btn className={clsx('w-[27px]', dark)}>Ø L</Btn>
            <Btn className={clsx('w-[27px]', dark)}>Ø R</Btn>
          </div>
          <Select label="Channel mode" value="Stereo" className="mt-[3px] w-full text-left" />
          <p className="mt-[6px] mb-1">Width</p>
          <Knob label="Width" angle={0} marker="#1c1c1c" />
          <p className="-mt-px">100 %</p>
          <Btn className={clsx('mt-[3px] w-full', dark)}>Mono</Btn>
          <Btn className={clsx('mt-auto w-full font-[Roboto] font-bold', dark)}>Bass Mono</Btn>
          <div className="mt-[3px] w-full flex justify-between">
            <Btn className={clsx('w-[41px]', dark)}>120 Hz</Btn>
            <Round label="Listen">
              <svg viewBox="0 0 10 10" className="size-[9px]" fill="none" stroke="#dcdcdc"><path d="M1.500 8V5a3.500 3.500 0 0 1 7 0v3" /><path d="M2 6v3M8 6v3" strokeWidth="2" /></svg>
            </Round>
          </div>
        </div>
        <div className="my-1 w-px bg-[#2a2a2a] relative">
          <i className="absolute top-[77px] left-0 border-y-4 border-l-4 border-y-transparent border-l-[#2a2a2a]" />
        </div>
        <div className="flex-1 px-2 pt-[3px] pb-[6px] flex flex-col items-center">
          <p>Output</p>
          <p className="mt-[7px] mb-1">Gain</p>
          <Knob label="Output gain" angle={0} marker="#1c1c1c" />
          <p className="-mt-px">0.00 dB</p>
          <p className="mt-[7px] mb-1">Balance</p>
          <Knob label="Balance" angle={0} marker="#1c1c1c" />
          <p className="-mt-px">C</p>
          <div className="mt-auto w-full flex justify-between">
            <Btn className={clsx('w-8', dark)}>Mute</Btn>
            <Btn className={clsx('w-5', dark)}>DC</Btn>
          </div>
        </div>
      </div>
    </Device>
  );
}

const LEDS = [
  { t: '20', tx: 40, ty: 46, x: 50, y: 50, c: '#3fee50' },
  { t: '15', tx: 69, ty: 26, x: 76, y: 31, c: '#3fee50' },
  { t: '10', tx: 104, ty: 12, x: 106, y: 20, c: '#3fee50' },
  { t: '7', tx: 125, ty: 10, x: 125, y: 18, c: '#3fee50' },
  { t: '5', tx: 138, ty: 10, x: 138, y: 18, c: '#b6f556' },
  { t: '3', tx: 152, ty: 12, x: 151, y: 20, c: '#b6f556' },
  { t: '0', tx: 173, ty: 18, x: 169, y: 26, c: '#7c7c7c' },
  { t: '3', tx: 192, ty: 27, x: 186, y: 34, c: '#7c7c7c' },
];

const arial = "font-['Liberation_Sans'] text-[10px] font-bold text-white whitespace-nowrap";

function VuMeter() {
  return (
    <Device
      title="VU Meter-18"
      width="w-[264px]"
      right={<>
        <Round label="Open window"><svg viewBox="0 0 10 10" className="size-[9px]" fill="none" stroke="#dcdcdc" strokeWidth="1.200"><path d="M1 2.500h8v5H1zM3 .5v2M7 .5v2M3 7.500v2M7 7.500v2" /></svg></Round>
        <Swap />
        <Save />
      </>}
    >
      <div className="h-[18px] pl-[5px] pr-[6px] pt-[2px] flex items-center gap-[3px]">
        <ArrowRight label="Next preset" />
        <span className={clsx('ml-[3px] w-[67px]', arial)}>Nominal Level</span>
        <Field label="Nominal level" value="-18 dB" className="w-[53px]" />
        <Select label="Channels" value="Stereo" className="flex-1" />
      </div>
      <div className="mx-[3px] h-[132px] rounded-xl bg-[#1f2123]">
        <svg viewBox="0 0 258 132" className="w-full h-full font-['Liberation_Sans']">
          {LEDS.map(({ t, tx, ty, x, y, c }) => (
            <g key={x}>
              <text x={tx} y={ty} fontSize="8" textAnchor="middle" fill="#a0a0a0">{t}</text>
              <rect x={x - 3.5} y={y - 5.500} width="7" height="11" fill={c} transform={`rotate(${(Math.atan2(x - 129, 128 - y) * 180) / Math.PI} ${x} ${y})`} />
            </g>
          ))}
          <text x="42" y="58" fontSize="10" textAnchor="middle" fill="#a0a0a0">-</text>
          <path d="M198 36v6M195 39h6" stroke="#c8c8c8" />
          <path d="M150.500 41L134 112h-1L147.500 41z" fill="#6cc8e6" />
          <circle cx="149" cy="41" r="3" fill="#6cd2f2" />
          <path d="M105 128a24 24 0 0 1 48 0M117 128a12 12 0 0 1 24 0" fill="none" stroke="#5cb4c4" />
          <circle cx="211" cy="77" r="6.500" fill="#4c4e52" />
          <rect x="7" y="103" width="75" height="22" rx="6" fill="#323538" />
          <rect x="176" y="103" width="75" height="22" rx="6" fill="#323538" />
          <text x="11" y="98" fontSize="11" fill="#b4b4b4">Current</text>
          <text x="247" y="98" fontSize="11" fill="#b4b4b4" textAnchor="end">Max</text>
          <g className="font-['Inter']" fontSize="13" fill="#e6e6e6" textAnchor="middle">
            <text x="44" y="119">-2.0 dB</text>
            <text x="213" y="119">6.0 dB</text>
          </g>
        </svg>
      </div>
      <div className="flex-1 px-[7px] flex items-center">
        <span className={clsx('w-[35px]', arial)}>Attack</span>
        <Field label="Attack" value="300" fill={26} className="w-[57px]" />
        <span className={clsx('ml-[9px] w-[42px]', arial)}>Release</span>
        <Field label="Release" value="300" fill={17} className="w-[85px]" />
        <span className="flex-1" />
        <ArrowRight label="More" />
      </div>
    </Device>
  );
}

function Pad() {
  return (
    <div className="w-[140px] pt-2 flex flex-col gap-[5px]">
      <div className="h-[140px] rounded-sm bg-[#121212] flex items-end">
        <i className="size-[13px] rounded-full border-2 border-[#e88b25]" />
      </div>
      <div className="flex gap-1">
        <Select label="X parameter" value="none" className="flex-1" />
        <Select label="Y parameter" value="none" className="flex-1" />
      </div>
    </div>
  );
}

function Compressor({ title }: { title: string }) {
  return (
    <Device title={title} width="w-[238px]" left={<><Fold /><Wrench /></>} right={<><Swap /><Save /></>}>
      <div className="flex-1 flex pl-[5px] pr-[5px]">
        <div className="w-[73px] pt-[3px] pb-[5px] flex flex-col items-center">
          <p className="self-start">Sidechain</p>
          <Select label="Sidechain input" value="No Input" className="w-full" />
          <div className="mt-[3px] w-full h-[13px] border border-[#1a1a1a]" />
          <p className="mt-[5px]">Gain</p>
          <Knob label={`${title} gain`} angle={-30} fill="#8c8c8c" />
          <p className="-mt-[5px]">0.00 dB</p>
          <p className="mt-px">Mix</p>
          <Knob label={`${title} mix`} angle={145} fill="#8c8c8c" />
          <p className="-mt-[5px]">100 %</p>
          <Btn className="mt-auto w-full bg-[#3a3a3a] text-[#7c7c7c]">Mute</Btn>
        </div>
        <div className="ml-[7px] mr-[7px] my-1 w-px bg-[#2a2a2a] relative">
          <i className="absolute top-[77px] left-0 border-y-4 border-l-4 border-y-transparent border-l-[#2a2a2a]" />
        </div>
        <Pad />
      </div>
    </Device>
  );
}

const BELL = 'M0 5h4l3-3.500h4L14 5h4M4 5l3 3.500h4L14 5';

const BANDS = [
  { n: 1, freq: '10.0 Hz', fa: -150, gain: '-15.0 dB', ga: -145, q: '0.75', on: true, qf: 36, shape: 'M0 9V6q0-5 5-5h10M8 4l4 5M12 4l-4 5M14 4v3h4M17 4v5' },
  { n: 2, freq: '82.1 Hz', fa: -75, gain: '-0.35 dB', ga: -3, q: '1.14', on: true, qf: 44, shape: BELL },
  { n: 3, freq: '1000 Hz', fa: 28, gain: '0.00 dB', ga: 0, q: '0.71', on: true, qf: 35, shape: BELL },
  { n: 4, freq: '14.4 kHz', fa: 132, gain: '-0.37 dB', ga: -3, q: '0.71', on: true, qf: 35, shape: 'M0 1.500h11q4 0 4 4V9' },
  { n: 5, freq: '100.0 Hz', fa: -65, gain: '0.00 dB', ga: 0, q: '0.71', on: false, qf: 0, shape: BELL },
];

function EqEight() {
  return (
    <article className="flex-1 min-w-0 h-[188px] rounded-l bg-[#5a5a5a] overflow-hidden text-[11px] leading-[13px] font-medium text-[#dcdcdc]">
      <header className="h-[17px] px-[3px] flex items-center gap-[3px]">
        <OnDot />
        <Fold up />
        <h2 className="ml-[2px] font-semibold">EQ Eight</h2>
      </header>
      <div className="h-[169px] flex gap-[2px] pl-[2px]">
        <div className="shrink-0 w-12 rounded-sm bg-[#464646] pl-[3px] pr-[3px] pt-[31px]">
          <p>Analyze</p>
          <p className="mt-[5px]">Block</p>
          <Select label="Block size" value="8192" />
          <p className="mt-[5px]">Refresh</p>
          <Field label="Refresh" value="60.00" fill={13} />
          <p className="mt-[6px]">Avg</p>
          <Field label="Average" value="1.00" />
        </div>
        {BANDS.map(({ n, freq, fa, gain, ga, q, on, qf, shape }) => {
          const ink = n === 2 || n === 3 ? '#141414' : '#2a2a2a';
          const soft = n === 1 || n === 5;
          return (
            <div key={n} className={clsx('shrink-0 w-[45px] rounded-sm pt-[2px] flex flex-col items-center whitespace-nowrap', n !== 2 && 'bg-[#464646]')}>
              <p>Freq</p>
              <Knob label={`Band ${n} frequency`} angle={fa} fill={soft ? '#8c8c8c' : '#35a3b1'} track={ink} needle={soft ? '#2a2a2a' : '#141414'} />
              <p className="-mt-[6px]">{freq}</p>
              <p>Gain</p>
              <span className="h-[5px]" />
              <Knob label={`Band ${n} gain`} angle={ga} bipolar fill={n === 1 ? '#8c8c8c' : undefined} track={ink} needle={ink} marker={n === 3 || n === 5 ? ink : '#8c8c8c'} />
              <p className="-mt-[2px]">{gain}</p>
              <p>Q</p>
              <Field label={`Band ${n} Q`} value={q} fill={qf} className="w-[37px]" />
              <Select label={`Band ${n} type`} value="" className="mt-[6px] w-[37px]">
                <svg viewBox="0 0 18 10" className="absolute left-[2px] top-px w-4 h-[9px] pointer-events-none" fill="none" stroke="#dcdcdc" strokeWidth="1.200"><path d={shape} /></svg>
              </Select>
              <label className="mt-[3px] flex items-center gap-[6px]">
                <input type="checkbox" defaultChecked={on} className="appearance-none size-[11px] border border-[#141414] bg-[#363636] checked:bg-[#46bccb]" />
                {n}
              </label>
            </div>
          );
        })}
      </div>
    </article>
  );
}

function Rack() {
  return (
    <section className="mt-2 h-[196px] pl-2 pr-2 flex gap-2">
      <aside className="w-[200px] p-1 rounded bg-[#282828]">
        <div className="h-full bg-[#464646] text-[10px] text-[#dcdcdc]">
          <h2 className="h-[17px] pl-[5px] leading-[17px] font-bold bg-[#5a5a5a]">周波数ディスプレイ</h2>
          <p className="pl-[5px] pt-[2px] leading-[15px] font-medium whitespace-nowrap">
            フィルターカーブ(および分析がオンの場<br />合は出力レベル)をグラフィック表示し<br />ます。ディスプレイ内の1つまたは複数<br />のフィルタードットをドラッグし、フィ<br />ルターカーブを調整します。フィルター<br />ドットをOption-ドラッグし、Qを調整<br />します。
          </p>
        </div>
      </aside>
      <div className="flex-1 min-w-0 flex py-1 pr-[3px] rounded-t bg-[#282828]">
        <Meter className="w-[15px]" />
        <Tuner />
        <Meter className="w-[11px]" />
        <Utility />
        <Meter className="w-[11px]" />
        <VuMeter />
        <Meter className="w-[11px]" />
        <Compressor title="VC 160" />
        <Meter className="w-[11px]" />
        <Compressor title="VC 2A" />
        <Meter className="w-[11px]" />
        <Device title="AmpliTube 5" width="w-[150px]" left={<><Fold /><Wrench /></>} right={<><Swap /><Save /></>}>
          <div className="px-[5px]"><Pad /></div>
        </Device>
        <Meter className="w-[11px]" />
        <EqEight />
      </div>
    </section>
  );
}

/* =========================
   STATUS BAR
========================= */
function StatusBar() {
  const dots = Array.from({ length: 190 }, (_, i) => {
    const noise = Math.abs((Math.sin(i * 12.9898) * 43758.5453) % 1);
    return [Math.floor(noise * 201), [1, 1, 5, 9, 14][(i * 7) % 5]];
  });
  const round = 'size-[18px] rounded-full bg-[#272727] flex items-center justify-center';
  return (
    <footer className="h-[38px] pl-2 pr-[10px] flex items-start">
      <button aria-label="Toggle info view" className={clsx(round, 'mt-[9px]')}>
        <svg viewBox="0 0 10 10" className="size-[11px] fill-[#505050]"><path d="M0 10h10L5 0z" /></svg>
      </button>
      <div className="mt-2 ml-[9px] flex-1 h-[22px] bg-[#464646] border-[3px] border-[#282828] rounded-xs" />
      <div className="mt-2 ml-2 relative w-[207px] h-[22px] bg-[#5a5a5a] border-[3px] border-[#282828] rounded-xs">
        <svg viewBox="0 0 201 16" className="w-full h-full" fill="#2a2a2a">
          {dots.map(([x, y], i) => <rect key={i} x={x} y={y} width="1" height="1" />)}
          <rect x="61" width="1" height="16" fill="#fff" />
        </svg>
      </div>
      <div className="ml-[7px] w-[214px] h-[30px] pl-[5px] pt-[9px] flex bg-[#282828] rounded-b text-[11px] leading-[18px] font-[Roboto] font-bold text-[#e6e6e6]">
        <span className="w-[26px]">Bass</span>
        <div className="relative w-[180px] h-5">
          <svg viewBox="0 0 180 20" className="w-full h-full">
            <rect y="2" width="180" height="16" fill="#3c3c3c" />
            <rect x="34" y="2" width="22" height="16" fill="#4c4c4c" />
            <rect x="106" y="3" width="34" height="14" fill="#505050" />
            <g fill="#101010">
              <rect x="2" y="3" width="20" height="14" />
              <rect x="63" y="4" width="10" height="12" />
              <rect x="82" y="4" width="10" height="12" />
              <rect x="95" y="4" width="9" height="12" />
              <rect x="147" y="4" width="10" height="6" />
              <rect x="170" y="4" width="10" height="12" />
            </g>
            <g stroke="#787878" strokeDasharray="1 2">
              <path d="M25 4v12M29 4v12M58 4v12M77 4v12M108 6h30M108 10h30M108 14h30M143 5v12M147 13h10M164 4v12M168 4v12" />
            </g>
            <text x="36" y="15" fontSize="8" fontWeight="400" fill="#c8c8c8">VU M</text>
          </svg>
          <div className="absolute left-0 top-0 w-[120px] h-5 border-2 border-[#a8a8a8]" />
        </div>
      </div>
      <button aria-label="Toggle device view" className={clsx(round, 'ml-2 mt-[9px]')}>
        <svg viewBox="0 0 10 10" className="size-[11px] fill-[#505050]"><path d="M0 10h10L5 0z" /></svg>
      </button>
    </footer>
  );
}

export default function App() {
  return (
    <div className="min-h-screen flex flex-col bg-[#343434] font-[Inter,'Noto_Sans_CJK_JP',sans-serif] overflow-hidden">
      <TopBar />
      <Arrangement />
      <EqDisplay />
      <Rack />
      <StatusBar />
    </div>
  );
}
